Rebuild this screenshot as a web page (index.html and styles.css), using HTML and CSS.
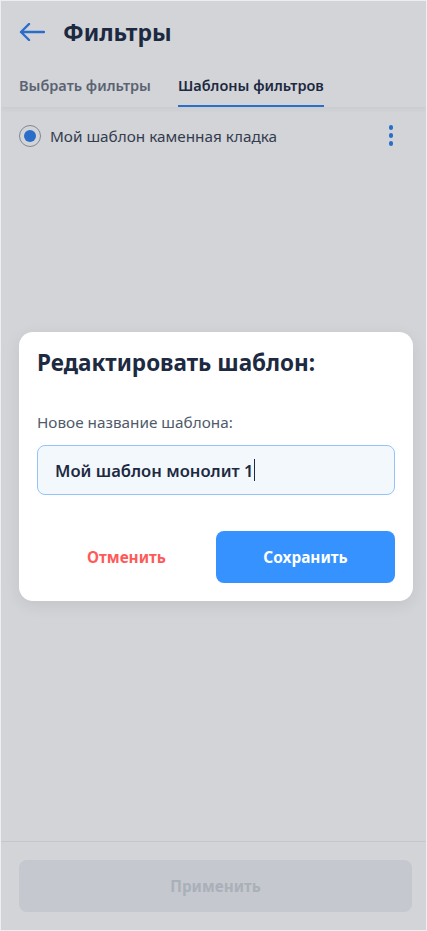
FILE: index.html
```html
<!DOCTYPE html>
<html lang="ru">
<head>
  <meta charset="UTF-8">
  <meta name="viewport" content="width=device-width, initial-scale=1.0">
  <title>Фильтры</title>
  <link rel="stylesheet" href="styles.css">
</head>
<body>
  <div class="screen">
    <div class="header">
      <div class="title-row">
        <svg class="back" width="26" height="18" viewBox="0 0 26 18">
          <path d="M25 9H2M10 1L2 9l8 8" fill="none" stroke="#2f80ed" stroke-width="2.4" stroke-linecap="round" stroke-linejoin="round"/>
        </svg>
        <h1>Фильтры</h1>
      </div>
      <div class="tabs">
        <div class="tab">Выбрать фильтры</div>
        <div class="tab active">Шаблоны фильтров</div>
      </div>
    </div>

    <div class="list">
      <div class="row">
        <span class="radio"><span class="dot"></span></span>
        <span class="row-name">Мой шаблон каменная кладка</span>
        <span class="kebab"><i></i><i></i><i></i></span>
      </div>
    </div>

    <div class="footer">
      <button class="apply" disabled>Применить</button>
    </div>

    <div class="overlay">
      <div class="modal">
        <h2>Редактировать шаблон:</h2>
        <label for="name">Новое название шаблона:</label>
        <div class="input">
          <span>Мой шаблон монолит 1</span><span class="caret"></span>
        </div>
        <div class="actions">
          <button class="cancel">Отменить</button>
          <button class="save">Сохранить</button>
        </div>
      </div>
    </div>
  </div>
</body>
</html>
```

FILE: styles.css
```css
/* Общие стили */
* {
  box-sizing: border-box;
}
body {
  margin: 0;
  font-family: "Noto Sans", "Open Sans", sans-serif;
  background-color: #ffffff;
}
.screen {
  position: relative;
  width: 427px;
  height: 931px;
  display: flex;
  flex-direction: column;
  background-color: #ffffff;
  border: 1px solid #eceef1;
  overflow: hidden;
}

/* Шапка */
.header {
  padding: 17px 18px 0;
  box-shadow: 0 3px 4px rgba(0, 0, 0, 0.04);
}
.title-row {
  display: flex;
  align-items: center;
  gap: 18px;
  height: 28px;
}
.title-row h1 {
  margin: 0;
  font-size: 23px;
  font-weight: 700;
  color: #1d2a42;
}
.tabs {
  display: flex;
  gap: 27px;
  margin-top: 29px;
}
.tab {
  font-size: 14.5px;
  font-weight: 600;
  color: #6b7280;
  padding-bottom: 10px;
  border-bottom: 2px solid transparent;
}
.tab.active {
  color: #1d2a42;
  border-bottom-color: #2f80ed;
}

/* Список шаблонов */
.list {
  flex: 1;
  padding: 11px 18px;
}
.row {
  display: flex;
  align-items: center;
  height: 35px;
}
.radio {
  width: 22px;
  height: 22px;
  border: 1px solid #9aa0a8;
  border-radius: 50%;
  display: flex;
  align-items: center;
  justify-content: center;
}
.dot {
  width: 12px;
  height: 12px;
  border-radius: 50%;
  background-color: #2f80ed;
}
.row-name {
  flex: 1;
  margin-left: 9px;
  font-size: 15.3px;
  color: #3a4353;
}
.kebab {
  display: flex;
  flex-direction: column;
  gap: 3.5px;
  margin-right: 15px;
}
.kebab i {
  width: 4.5px;
  height: 4.5px;
  border-radius: 50%;
  background-color: #2f80ed;
}

/* Низ */
.footer {
  border-top: 1px solid #eef0f2;
  padding: 18px 14px 18px 18px;
}
.apply {
  width: 100%;
  height: 52px;
  border: none;
  border-radius: 8px;
  background-color: #eff0f4;
  color: #cdd2d7;
  font-family: inherit;
  font-size: 15.3px;
  font-weight: 700;
}

/* Модальное окно */
.overlay {
  position: absolute;
  inset: 0;
  background-color: rgba(30, 40, 60, 0.2);
  display: flex;
  align-items: center;
  justify-content: center;
  padding-top: 2px;
}
.modal {
  width: 394px;
  margin-left: 5px;
  background-color: #ffffff;
  border-radius: 14px;
  padding: 16px 18px 18px;
  box-shadow: 0 4px 16px rgba(0, 0, 0, 0.08);
}
.modal h2 {
  margin: 0;
  font-size: 22.5px;
  line-height: 30px;
  font-weight: 700;
  color: #1d2a42;
}
.modal label {
  display: block;
  margin-top: 34px;
  font-size: 15.3px;
  line-height: 20px;
  color: #4f5a6a;
}
.input {
  display: flex;
  align-items: center;
  height: 50px;
  margin-top: 13px;
  padding: 0 17px;
  background-color: #f3f8fd;
  border: 1px solid #92c4fb;
  border-radius: 8px;
  font-size: 16.6px;
  font-weight: 600;
  color: #1d2a42;
}
.caret {
  width: 1px;
  height: 22px;
  margin-left: 1px;
  background-color: #1d2a42;
}
.actions {
  display: grid;
  grid-template-columns: 1fr 1fr;
  margin-top: 36px;
}
.actions button {
  height: 52px;
  border: none;
  border-radius: 8px;
  font-family: inherit;
  font-size: 15.4px;
  font-weight: 700;
}
.cancel {
  background: none;
  color: #ff5a5a;
}
.save {
  background-color: #3592fe;
  color: #ffffff;
}
```
